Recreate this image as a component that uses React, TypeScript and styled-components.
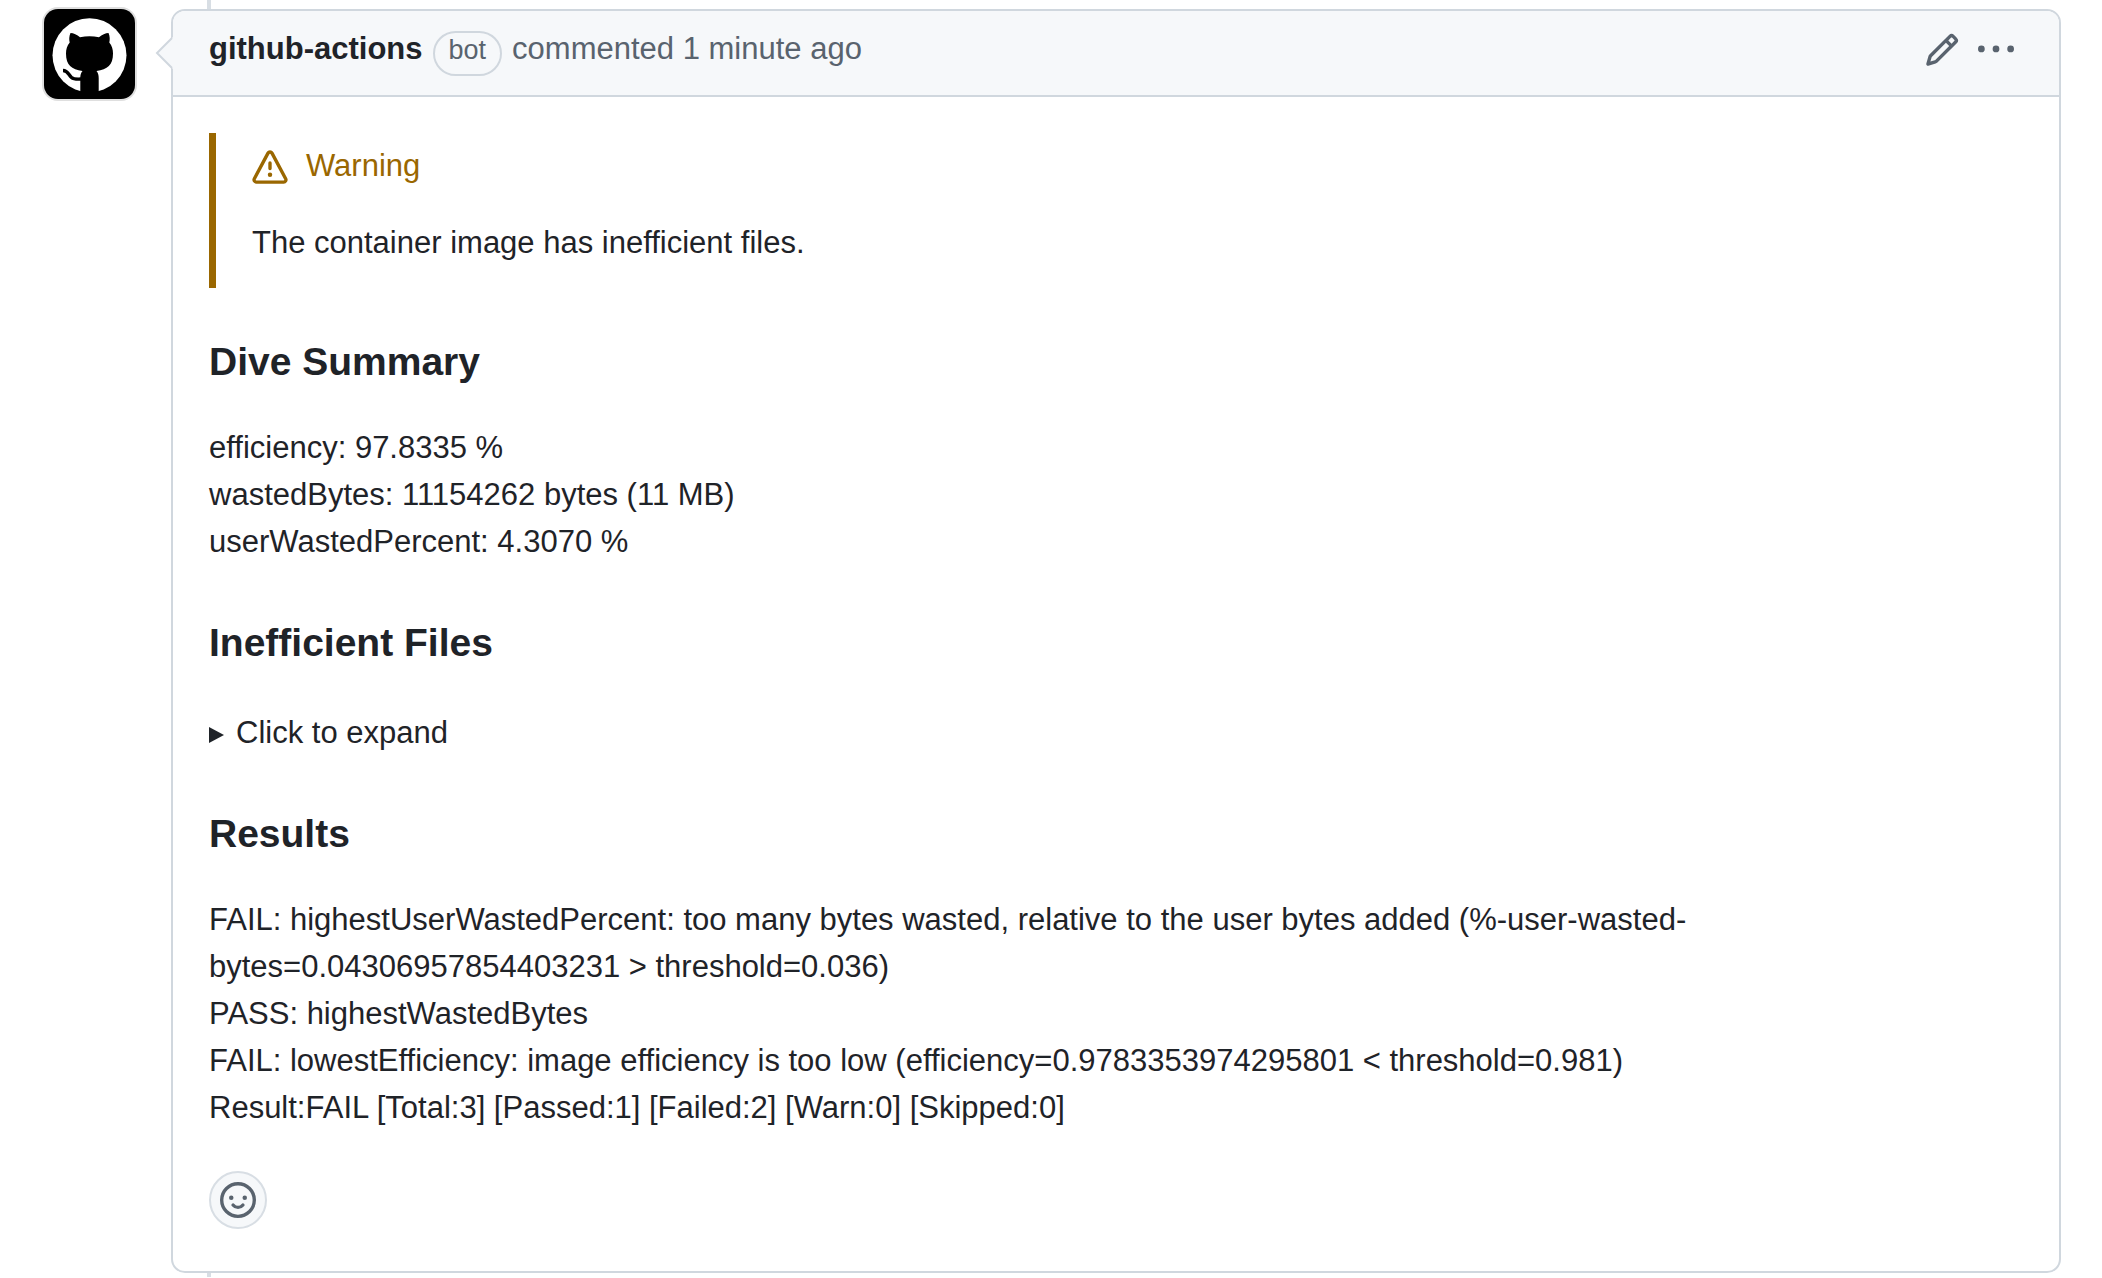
import React from "react";
import styled, { createGlobalStyle } from "styled-components";

const GlobalStyle = createGlobalStyle`
  *, *::before, *::after { box-sizing: border-box; }
  body {
    margin: 0;
    background: #ffffff;
    color: #1f2328;
    font-family: "Liberation Sans", Arial, Helvetica, sans-serif;
    font-size: 31px;
    line-height: 47px;
  }
`;

const TimelineItem = styled.main`
  position: relative;
  display: flex;
  align-items: flex-start;
  gap: 36px;
  padding: 9px 41px 4px 44px;

  &::before {
    content: "";
    position: absolute;
    top: 0;
    bottom: 0;
    left: 207px;
    width: 4px;
    background: #d8dee4;
  }
`;

const AvatarLink = styled.a`
  flex: none;
  display: block;
  width: 91px;
  height: 90px;
  border-radius: 14px;
  background: #000000;
  box-shadow: 0 0 0 2px #dfdfdf;
`;

const Comment = styled.article`
  position: relative;
  flex: 1;
  min-width: 0;
  border: 2px solid #d0d7de;
  border-radius: 14px;
  background: #ffffff;
`;

const Pointer = styled.svg`
  position: absolute;
  top: 24px;
  left: -18px;
  width: 18px;
  height: 36px;
`;

const Header = styled.header`
  display: flex;
  align-items: center;
  justify-content: space-between;
  height: 86px;
  padding: 0 45px 6px 36px;
  border-bottom: 2px solid #d0d7de;
  border-radius: 12px 12px 0 0;
  background: #f6f8fa;
`;

const Byline = styled.div`
  display: flex;
  align-items: baseline;
  gap: 10px;
  color: #59636e;
`;

const Author = styled.a`
  color: #1f2328;
  font-weight: 700;
  text-decoration: none;
`;

const BotLabel = styled.span`
  padding: 0 14px 6px;
  border: 2px solid #d0d7de;
  border-radius: 23px;
  font-size: 27px;
  line-height: 35px;
`;

const Timestamp = styled.a`
  color: inherit;
  text-decoration: none;
`;

const Actions = styled.div`
  display: flex;
  gap: 18px;
`;

const IconButton = styled.button`
  display: flex;
  padding: 0;
  border: 0;
  background: transparent;
  color: #59636e;
`;

const Icon = styled.svg`
  display: block;
  width: 36px;
  height: 36px;
  fill: currentColor;
`;

const Markdown = styled.div`
  padding: 36px 36px 0;

  & > :last-child {
    margin-bottom: 0;
  }
`;

const Alert = styled.div`
  padding: 17px 36px 22px;
  border-left: 7px solid #9a6700;
`;

const AlertTitle = styled.p`
  display: flex;
  gap: 18px;
  height: 36px;
  margin: 0 0 33px;
  color: #9a6700;
  line-height: 32px;
`;

const AlertText = styled.p`
  margin: 0;
`;

const Paragraph = styled.p`
  margin: 0 0 53px;
`;

const Heading = styled.h3`
  margin: 49px 0 38px;
  font-size: 39px;
  line-height: 49px;
`;

const Disclosure = styled.details`
  margin: 42px 0 53px;
`;

const DisclosureLabel = styled.summary`
  display: flex;
  align-items: center;
  gap: 12px;
  list-style: none;

  &::-webkit-details-marker {
    display: none;
  }

  &::before {
    content: "";
    margin-top: 4px;
    border-style: solid;
    border-width: 8px 0 8px 15px;
    border-color: transparent transparent transparent currentColor;
  }
`;

const Reactions = styled.div`
  display: flex;
  padding: 40px 36px 42px;
`;

const ReactionButton = styled.button`
  display: grid;
  place-items: center;
  width: 58px;
  height: 58px;
  padding: 0;
  border: 2px solid #d8dee4;
  border-radius: 50%;
  background: #f6f8fa;
  color: #59636e;
`;

const paths = {
  pencil:
    "M11.013 1.427a1.75 1.75 0 0 1 2.474 0l1.086 1.086a1.75 1.75 0 0 1 0 2.474l-8.61 8.61c-.21.21-.47.364-.756.445l-3.251.93a.75.75 0 0 1-.927-.928l.929-3.25c.081-.286.235-.547.445-.758l8.61-8.61Zm.176 4.823L9.75 4.81l-6.286 6.287a.253.253 0 0 0-.064.108l-.558 1.953 1.953-.558a.253.253 0 0 0 .108-.064Zm1.238-3.763a.25.25 0 0 0-.354 0L10.811 3.75l1.439 1.44 1.263-1.263a.25.25 0 0 0 0-.354Z",
  kebab:
    "M8 9a1.5 1.5 0 1 0 0-3 1.5 1.5 0 0 0 0 3ZM1.5 9a1.5 1.5 0 1 0 0-3 1.5 1.5 0 0 0 0 3Zm13 0a1.5 1.5 0 1 0 0-3 1.5 1.5 0 0 0 0 3Z",
  alert:
    "M6.457 1.047c.659-1.234 2.427-1.234 3.086 0l6.082 11.378A1.75 1.75 0 0 1 14.082 15H1.918a1.75 1.75 0 0 1-1.543-2.575Zm1.763.707a.25.25 0 0 0-.44 0L1.698 13.132a.25.25 0 0 0 .22.368h12.164a.25.25 0 0 0 .22-.368Zm.53 3.996v2.5a.75.75 0 0 1-1.5 0v-2.5a.75.75 0 0 1 1.5 0ZM9 11a1 1 0 1 1-2 0 1 1 0 0 1 2 0Z",
};

function Glyph({ name }: { name: keyof typeof paths }) {
  return (
    <Icon viewBox="0 0 16 16" aria-hidden="true">
      <path d={paths[name]} />
    </Icon>
  );
}

function Smiley() {
  return (
    <Icon viewBox="0 0 16 16" aria-hidden="true">
      <circle cx="8" cy="8" r="7.25" fill="none" stroke="currentColor" strokeWidth="1.5" />
      <circle cx="5" cy="7" r="1" />
      <circle cx="11" cy="7" r="1" />
      <path
        d="M5.8 10.2Q6.7 11.3 8 11.3T10.2 10.2"
        fill="none"
        stroke="currentColor"
        strokeWidth="1.5"
        strokeLinecap="round"
      />
    </Icon>
  );
}

function Octocat() {
  return (
    <svg width="91" height="90" viewBox="0 0 91 90" aria-hidden="true">
      <circle cx="45.5" cy="46.3" r="37" fill="#ffffff" />
      <path
        d="M26.5 24C29.5 24 33 26 36 28.2Q45.5 26.4 55 28.2C58 26 61.5 24 64.5 24C66 27.5 66 30.5 65.3 33.5C68 37 69 40 69 44.5C69 56 63.5 60.5 52.5 62C54.2 64 54.7 66 54.7 69V90H36.3V69C36.3 66 36.8 64 38.5 62C27.5 60.5 22 56 22 44.5C22 40 23 37 25.7 33.5C25 30.5 25 27.5 26.5 24Z"
        fill="#000000"
      />
      <path
        d="M19 61.5C24 61.5 24.5 66 27.5 68.5C30 70.6 33 70.3 37.5 70"
        fill="none"
        stroke="#000000"
        strokeWidth="3.4"
      />
    </svg>
  );
}

export default function App() {
  return (
    <>
      <GlobalStyle />
      <TimelineItem>
        <AvatarLink href="#github-actions" aria-label="github-actions">
          <Octocat />
        </AvatarLink>
        <Comment>
          <Header>
            <Byline>
              <Author href="#github-actions">github-actions</Author>
              <BotLabel>bot</BotLabel>
              <Timestamp href="#comment">commented 1 minute ago</Timestamp>
            </Byline>
            <Actions>
              <IconButton type="button" aria-label="Edit comment">
                <Glyph name="pencil" />
              </IconButton>
              <IconButton type="button" aria-label="Show options">
                <Glyph name="kebab" />
              </IconButton>
            </Actions>
          </Header>
          <Pointer viewBox="0 0 18 36" aria-hidden="true">
            <path d="M18 2L2 18L18 34Z" fill="#f6f8fa" />
            <path d="M17 3L2 18L17 33" fill="none" stroke="#d0d7de" strokeWidth="2" />
          </Pointer>
          <Markdown>
            <Alert>
              <AlertTitle>
                <Glyph name="alert" />
                Warning
              </AlertTitle>
              <AlertText>The container image has inefficient files.</AlertText>
            </Alert>
            <Heading>Dive Summary</Heading>
            <Paragraph>
              efficiency: 97.8335 %<br />
              wastedBytes: 11154262 bytes (11 MB)<br />
              userWastedPercent: 4.3070 %
            </Paragraph>
            <Heading>Inefficient Files</Heading>
            <Disclosure>
              <DisclosureLabel>Click to expand</DisclosureLabel>
            </Disclosure>
            <Heading>Results</Heading>
            <Paragraph>
              FAIL: highestUserWastedPercent: too many bytes wasted, relative to the user bytes added
              (%-user-wasted-bytes=0.04306957854403231 &gt; threshold=0.036)
              <br />
              PASS: highestWastedBytes
              <br />
              FAIL: lowestEfficiency: image efficiency is too low (efficiency=0.9783353974295801 &lt; threshold=0.981)
              <br />
              Result:FAIL [Total:3] [Passed:1] [Failed:2] [Warn:0] [Skipped:0]
            </Paragraph>
          </Markdown>
          <Reactions>
            <ReactionButton type="button" aria-label="Add reaction">
              <Smiley />
            </ReactionButton>
          </Reactions>
        </Comment>
      </TimelineItem>
    </>
  );
}
